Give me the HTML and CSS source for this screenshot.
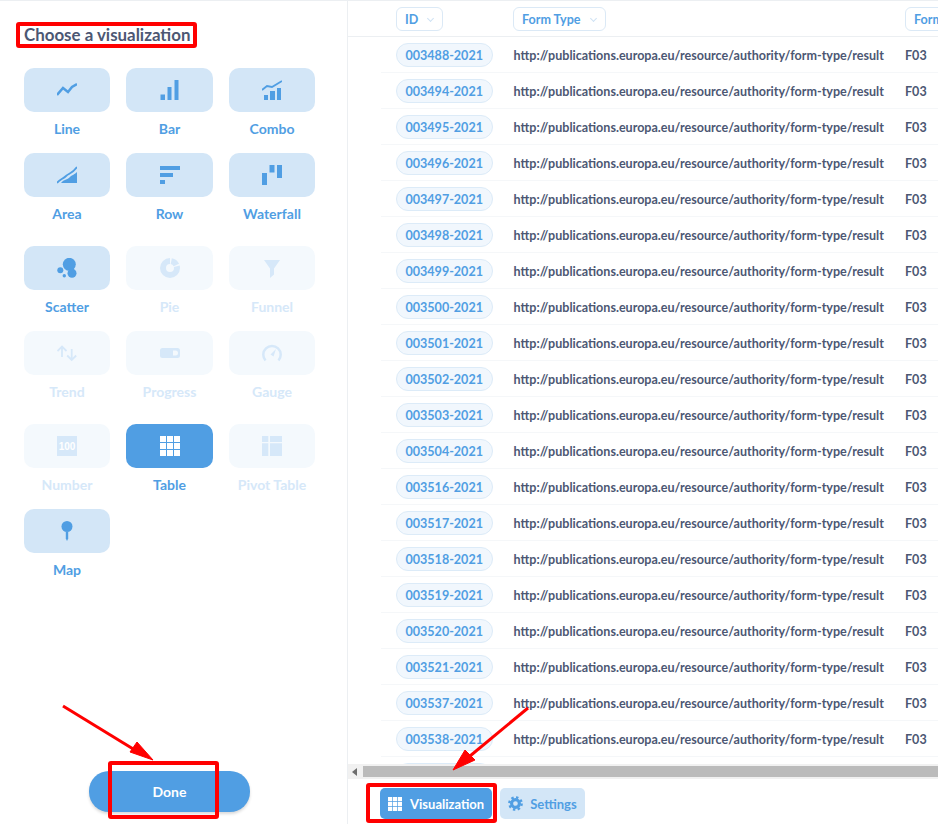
FILE: index.html
```html
<!DOCTYPE html>
<html lang="en">
  <head>
    <meta charset="UTF-8" />
    <title>Choose a visualization</title>
    <link rel="stylesheet" href="styles.css">
  </head>
  <body>
    <div class="page">
      <aside class="sidebar">
        <h2 class="sidebar-title">Choose a visualization</h2>

        <div class="viz-group">
          <div class="viz">
            <div class="tile"><svg viewBox="0 0 20 20"><path class="line" d="M0 15L6 8L11 12L15 7L20 4"/></svg></div>
            <span>Line</span>
          </div>
          <div class="viz">
            <div class="tile"><svg viewBox="0 0 20 20"><path d="M.5 14.5H5V20H.5ZM7.5 7H11.5V20H7.5ZM14.5 0H18.5V20H14.5Z"/></svg></div>
            <span>Bar</span>
          </div>
          <div class="viz">
            <div class="tile"><svg viewBox="0 0 20 20"><path d="M2 15H6V20H2ZM8 11H13V20H8ZM15 8H19V20H15Z"/><path class="line thin" d="M0 10L5 6L10 7L20 1"/></svg></div>
            <span>Combo</span>
          </div>
          <div class="viz">
            <div class="tile"><svg viewBox="0 0 20 20"><path d="M4 18C7 14 10 15 13 12C15 10 17 10 20 7V18Z"/><path class="line thin" d="M0 18C3 14 6 14 9 11C12 8 15 9 20 2"/></svg></div>
            <span>Area</span>
          </div>
          <div class="viz">
            <div class="tile"><svg viewBox="0 0 20 20"><path d="M0 1H20V5H0ZM0 8H13V12H0ZM0 15H5V19H0Z"/></svg></div>
            <span>Row</span>
          </div>
          <div class="viz">
            <div class="tile"><svg viewBox="0 0 20 20"><path d="M0 8H5V20H0ZM7.5 0H12.5V7.5H7.5ZM15 0H20V13H15Z"/></svg></div>
            <span>Waterfall</span>
          </div>
        </div>

        <div class="viz-group">
          <div class="viz">
            <div class="tile"><svg viewBox="0 0 20 20"><circle cx="12.3" cy="6.3" r="6.5"/><circle cx="15" cy="15.3" r="4.5"/><circle cx="3.3" cy="12.3" r="3"/><circle cx="7.3" cy="17.7" r="1.7"/></svg></div>
            <span>Scatter</span>
          </div>
          <div class="viz off">
            <div class="tile"><svg viewBox="0 0 20 20"><circle class="donut" cx="10" cy="10" r="7" pathLength="100" stroke-dasharray="15 3 79 3" stroke-dashoffset="-3" transform="rotate(-90 10 10)"/></svg></div>
            <span>Pie</span>
          </div>
          <div class="viz off">
            <div class="tile"><svg viewBox="0 0 20 20"><path d="M2 2H18L12 10.5V16.5L8 20V10.5Z"/></svg></div>
            <span>Funnel</span>
          </div>
          <div class="viz off">
            <div class="tile"><svg viewBox="0 0 20 20"><path class="line thin" d="M5 3.5V14M.5 8L5 3.5L9.5 8M14.7 6V17M10.2 12.5L14.7 17L19.2 12.5"/></svg></div>
            <span>Trend</span>
          </div>
          <div class="viz off">
            <div class="tile"><svg viewBox="0 0 20 20"><path fill-rule="evenodd" d="M2.5 5H17.5A2.5 2.5 0 0 1 20 7.5V12.5A2.5 2.5 0 0 1 17.5 15H2.5A2.5 2.5 0 0 1 0 12.5V7.5A2.5 2.5 0 0 1 2.5 5ZM13 7.5V12.5H15.5A2.5 2.5 0 0 0 15.5 7.5Z"/></svg></div>
            <span>Progress</span>
          </div>
          <div class="viz off">
            <div class="tile"><svg viewBox="0 0 20 20"><path class="line" d="M3.5 17.5A8.7 8.7 0 1 1 16.5 17.5"/><path d="M8.5 11.5L14 6L11.5 13.5Z"/></svg></div>
            <span>Gauge</span>
          </div>
        </div>

        <div class="viz-group">
          <div class="viz off">
            <div class="tile"><svg viewBox="0 0 20 20"><rect width="20" height="20"/><text class="num" x="10" y="13.6">100</text></svg></div>
            <span>Number</span>
          </div>
          <div class="viz on">
            <div class="tile"><svg viewBox="0 0 20 20"><path d="M0 0H6V6H0ZM7 0H13V6H7ZM14 0H20V6H14ZM0 7H6V13H0ZM7 7H13V13H7ZM14 7H20V13H14ZM0 14H6V20H0ZM7 14H13V20H7ZM14 14H20V20H14Z"/></svg></div>
            <span>Table</span>
          </div>
          <div class="viz off">
            <div class="tile"><svg viewBox="0 0 20 20"><path d="M0 0H6.3V6H0ZM8 0H20V6H8ZM0 7.3H6.3V20H0ZM8 7.3H20V20H8Z"/></svg></div>
            <span>Pivot Table</span>
          </div>
          <div class="viz">
            <div class="tile"><svg viewBox="0 0 20 20"><circle cx="10" cy="5.5" r="5.5"/><path d="M8.8 11H11.2V17.5L10 20L8.8 17.5Z"/></svg></div>
            <span>Map</span>
          </div>
        </div>

        <button class="done">Done</button>
      </aside>

      <main class="content">
        <div class="table-wrap">
          <div class="head">
            <div class="head-id"><span class="head-btn">ID<i class="chev"></i></span></div>
            <div class="head-type"><span class="head-btn">Form Type<i class="chev"></i></span></div>
            <div><span class="head-btn">Form Number<i class="chev"></i></span></div>
          </div>
          <div id="rows"></div>
          <div class="row"><div class="col-id"><span class="pill pill-empty"></span></div></div>
        </div>

        <div class="scrollbar">
          <div class="scroll-arrow"></div>
          <div class="scroll-thumb"></div>
        </div>

        <div class="bottom-bar">
          <button class="tab tab-on">
            <svg viewBox="0 0 20 20"><path d="M0 0H6V6H0ZM7 0H13V6H7ZM14 0H20V6H14ZM0 7H6V13H0ZM7 7H13V13H7ZM14 7H20V13H14ZM0 14H6V20H0ZM7 14H13V20H7ZM14 14H20V20H14Z"/></svg>
            Visualization
          </button>
          <button class="tab">
            <svg viewBox="0 0 20 20"><circle class="gear" cx="10" cy="10" r="5.2"/><circle class="gear-teeth" cx="10" cy="10" r="8.2" pathLength="80" stroke-dasharray="5 5"/></svg>
            Settings
          </button>
        </div>
      </main>
    </div>

    <!-- red marks drawn over the screenshot -->
    <svg class="marks" viewBox="0 0 938 824">
      <rect x="18" y="24" width="177" height="22" rx="1"/>
      <rect x="110" y="763" width="107" height="54" rx="1"/>
      <rect x="368" y="785" width="127" height="36" rx="1"/>
      <path d="M63 706L143 755"/>
      <path class="head-fill" d="M153 760L130 752L137 742Z"/>
      <path d="M528 708L464 761"/>
      <path class="head-fill" d="M453 770L465 750L475 760Z"/>
    </svg>

    <script>
      const ids = [
        "003488", "003494", "003495", "003496", "003497", "003498", "003499",
        "003500", "003501", "003502", "003503", "003504", "003516", "003517",
        "003518", "003519", "003520", "003521", "003537", "003538",
      ];
      const rows = document.getElementById("rows");

      ids.forEach((id) => {
        const row = document.createElement("div");
        row.className = "row";
        row.innerHTML =
          '<div class="col-id"><span class="pill">' + id + "-2021</span></div>" +
          '<div class="col-type">http://publications.europa.eu/resource/authority/form-type/result</div>' +
          "<div>F03</div>";
        rows.appendChild(row);
      });
    </script>
  </body>
</html>
```

FILE: styles.css
```css
* {
  box-sizing: border-box;
}
body {
  margin: 0;
  font-family: Lato, sans-serif;
  font-weight: 700;
  color: #4c5773;
  background: #fff;
  overflow: hidden;
}
.page {
  display: flex;
  width: 938px;
  height: 824px;
  border-top: 1px solid #eceff2;
}
svg {
  display: block;
  fill: currentColor;
}

/* left panel */
.sidebar {
  display: flex;
  flex-direction: column;
  width: 348px;
  flex-shrink: 0;
  padding: 24px 0 12px 24px;
  border-right: 1px solid #eceff2;
}
.sidebar-title {
  margin: 0 0 24px;
  font-size: 16.9px;
  line-height: 19px;
  font-weight: 700;
  color: #4c5773;
}
.viz-group {
  display: grid;
  grid-template-columns: 86px 87px 86px;
  column-gap: 16px;
  margin-bottom: 8px;
}
.viz {
  display: flex;
  flex-direction: column;
  align-items: center;
  height: 85px;
  font-size: 14px;
  line-height: 20px;
  color: #509ee3;
}
.tile {
  display: flex;
  align-items: center;
  justify-content: center;
  width: 100%;
  height: 44px;
  margin-bottom: 7px;
  border-radius: 10px;
  background: #d3e6f7;
}
.tile svg {
  width: 20px;
  height: 20px;
}
.line {
  fill: none;
  stroke: currentColor;
  stroke-width: 2.5;
}
.line.thin {
  stroke-width: 1.8;
}
.donut {
  fill: none;
  stroke: currentColor;
  stroke-width: 6;
}
.num {
  font-family: "Liberation Sans", sans-serif;
  font-size: 10px;
  font-weight: 700;
  fill: #fff;
  text-anchor: middle;
}
.viz.off {
  color: #d6e8f9;
}
.viz.off .tile {
  background: #f4f9fd;
}
.viz.on .tile {
  background: #509ee3;
  color: #fff;
}
.done {
  align-self: flex-start;
  width: 161px;
  height: 41px;
  margin: auto 0 0 65px;
  border: none;
  border-radius: 20px;
  background: #509ee3;
  color: #fff;
  font: 700 14px Lato, sans-serif;
  box-shadow: 0 2px 3px rgba(0, 0, 0, 0.15);
}

/* table side */
.content {
  display: flex;
  flex-direction: column;
  flex: 1;
  min-width: 0;
}
.table-wrap {
  flex: 1;
  min-height: 0;
  overflow: hidden;
}
.head {
  display: flex;
  align-items: center;
  height: 36px;
  padding: 1px 0 0 48px;
  border-bottom: 1px solid #eceff2;
}
.row {
  display: flex;
  align-items: center;
  width: 700px;
  height: 36px;
  margin-left: 33px;
  padding: 1px 0 0 15px;
  font-size: 12.55px;
  border-bottom: 1px solid #f5f7f9;
}
.head > div,
.row > div {
  white-space: nowrap;
}
.col-id {
  display: flex;
  width: 117.5px;
  flex-shrink: 0;
}
.col-type {
  width: 391.5px;
  flex-shrink: 0;
}
.head-id {
  width: 117px;
  flex-shrink: 0;
}
.head-type {
  width: 392px;
  flex-shrink: 0;
}
.head-btn {
  display: inline-flex;
  align-items: center;
  height: 24px;
  padding: 0 7px 0 8px;
  border: 1px solid #dbe9f6;
  border-radius: 6px;
  font-size: 12.55px;
  color: #509ee3;
}
.chev {
  width: 5px;
  height: 5px;
  margin: -2px 2px 0 10px;
  border-right: 1px solid #cfe2f4;
  border-bottom: 1px solid #cfe2f4;
  transform: rotate(45deg);
}
.pill {
  display: block;
  height: 24px;
  padding: 0 9px 0 8.5px;
  border: 1px solid #dcebf8;
  border-radius: 12px;
  background: #f1f7fd;
  font-size: 12.55px;
  line-height: 23px;
  color: #509ee3;
}
.pill-empty {
  width: 96px;
}
.scrollbar {
  display: flex;
  align-items: center;
  flex-shrink: 0;
  height: 15px;
  background: #f1f1f1;
}
.scroll-arrow {
  width: 0;
  height: 0;
  margin: 0 6px 0 4px;
  border-top: 4px solid transparent;
  border-bottom: 4px solid transparent;
  border-right: 5px solid #6e6e6e;
}
.scroll-thumb {
  flex: 1;
  height: 11px;
  background: #bbb;
}
.bottom-bar {
  display: flex;
  gap: 8px;
  flex-shrink: 0;
  height: 45px;
  padding: 9px 0 0 32px;
}
.tab {
  display: flex;
  align-items: center;
  gap: 7px;
  height: 31px;
  padding: 0 8px;
  border: none;
  border-radius: 5px;
  background: #d3e6f7;
  color: #509ee3;
  font: 700 13px Lato, sans-serif;
}
.tab svg {
  width: 15px;
  height: 15px;
}
.tab-on {
  gap: 8px;
  background: #509ee3;
  color: #fff;
}
.tab-on svg {
  width: 14px;
  height: 14px;
}
.gear {
  fill: none;
  stroke: currentColor;
  stroke-width: 4.2;
}
.gear-teeth {
  fill: none;
  stroke: currentColor;
  stroke-width: 3.2;
}

/* annotations */
.marks {
  position: absolute;
  top: 0;
  left: 0;
  width: 938px;
  height: 824px;
  fill: none;
  stroke: #f00;
  stroke-width: 4;
  pointer-events: none;
}
.marks path {
  stroke-width: 3;
}
.marks .head-fill {
  fill: #f00;
  stroke-width: 1;
}
```
